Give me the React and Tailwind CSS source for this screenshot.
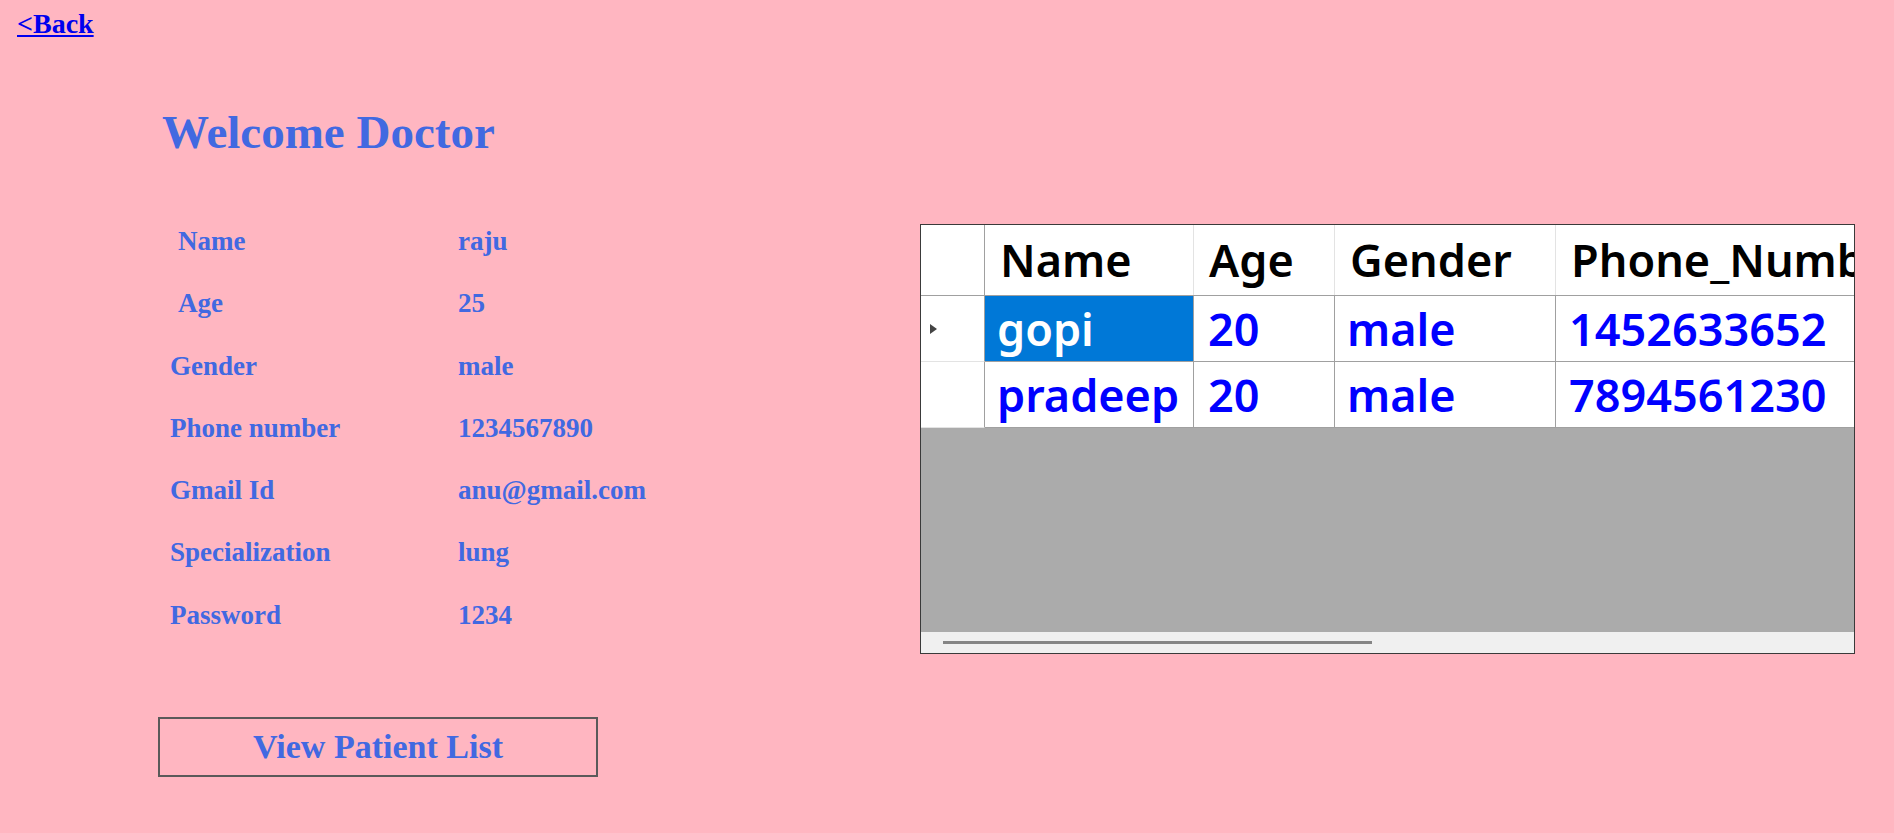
const profile = [
  { label: 'Name', value: 'raju', indent: true },
  { label: 'Age', value: '25', indent: true },
  { label: 'Gender', value: 'male' },
  { label: 'Phone number', value: '1234567890' },
  { label: 'Gmail Id', value: 'anu@gmail.com' },
  { label: 'Specialization', value: 'lung' },
  { label: 'Password', value: '1234' },
]

const patients = [
  { name: 'gopi', age: '20', gender: 'male', phone: '1452633652' },
  { name: 'pradeep', age: '20', gender: 'male', phone: '7894561230' },
]

const cols = 'grid grid-cols-[64px_209px_141px_221px_1fr]'

const PatientGrid = () => {
  return (
    <div className="w-[935px] h-[430px] border border-[#3a3a3a] bg-[#ababab] flex flex-col overflow-hidden font-['Noto_Sans',sans-serif] font-semibold text-[45px]">
      {/* Header row */}
      <div className={`${cols} h-[71px] bg-white border-b border-[#a0a0a0] leading-[70px] text-black`}>
        <div className="border-r border-[#a0a0a0]" />
        <div className="pl-[15px] border-r border-[#e3e3e3]">Name</div>
        <div className="pl-[15px] border-r border-[#e3e3e3]">Age</div>
        <div className="pl-[15px] border-r border-[#e3e3e3]">Gender</div>
        <div className="pl-[15px] whitespace-nowrap overflow-hidden">Phone_Number</div>
      </div>

      {/* Data rows */}
      {patients.map((p, i) => (
        <div key={p.phone} className={`${cols} h-[66px] leading-[65px] text-[#0000ff]`}>
          <div className="bg-white border-r border-[#a0a0a0] border-b border-b-[#e3e3e3] flex items-center pl-[9px]">
            {i === 0 && (
              <svg width="7" height="10" viewBox="0 0 7 10">
                <path d="M0 0 L7 5 L0 10 Z" fill="#444" />
              </svg>
            )}
          </div>
          <div className={`pl-[12px] border-r border-b border-[#a0a0a0] ${i === 0 ? 'bg-[#0078d7] text-white' : 'bg-white'}`}>
            {p.name}
          </div>
          <div className="pl-[14px] bg-white border-r border-b border-[#a0a0a0]">{p.age}</div>
          <div className="pl-[12px] bg-white border-r border-b border-[#a0a0a0]">{p.gender}</div>
          <div className="pl-[13px] bg-white border-b border-[#a0a0a0] whitespace-nowrap overflow-hidden">{p.phone}</div>
        </div>
      ))}

      {/* Empty area */}
      <div className="flex-1" />

      {/* Horizontal scrollbar */}
      <div className="h-[21px] bg-[#f0f0f0] pt-[9px] pl-[22px]">
        <div className="w-[429px] h-[3px] bg-[#858585]" />
      </div>
    </div>
  )
}

const App = () => {
  return (
    <div className="min-h-screen w-full bg-[#ffb6c1] font-['Liberation_Serif',serif] font-bold text-[#4169e1]">
      {/* Back link */}
      <div className="pt-[8px] pl-[17px] h-[40px]">
        <a href="#" className="text-[28px] leading-[32px] text-[#0000ee] underline">&lt;Back</a>
      </div>

      <h1 className="mt-[66px] pl-[162px] text-[47px] leading-[52px] font-bold">Welcome Doctor</h1>

      <div className="flex mt-[51px]">
        {/* Profile details */}
        <div className="w-[920px] shrink-0 pl-[158px]">
          <div className="pl-[12px] text-[27px]">
            {profile.map((row) => (
              <div key={row.label} className="flex h-[62.3px] leading-[64px]">
                <div className={`w-[288px] ${row.indent ? 'pl-[8px]' : ''}`}>{row.label}</div>
                <div>{row.value}</div>
              </div>
            ))}
          </div>

          <button className="mt-[72px] w-[440px] h-[60px] border-2 border-[#5a5a5a] text-[34px] leading-[56px] text-[#4169e1] font-bold">
            View Patient List
          </button>
        </div>

        {/* Patient list */}
        <div className="mt-[15px]">
          <PatientGrid />
        </div>
      </div>
    </div>
  )
}

export default App
